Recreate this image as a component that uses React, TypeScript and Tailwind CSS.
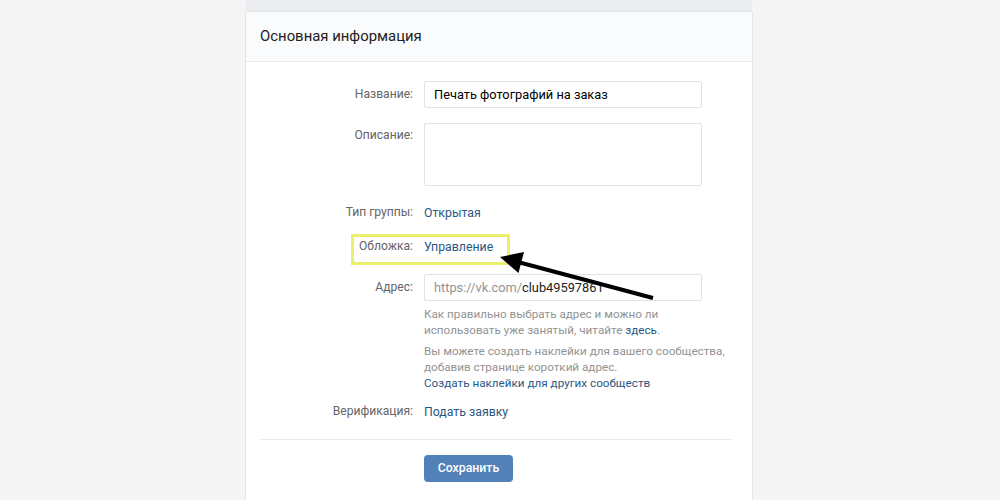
import React from "react";

const font = { fontFamily: "Roboto, 'Open Sans', 'Liberation Sans', sans-serif" };

function Row({ label, children, className = "", labelClass = "" }: { label: string; children: React.ReactNode; className?: string; labelClass?: string }) {
  return (
    <div className={`flex ${className}`}>
      <div className={`w-[153px] shrink-0 text-right text-[12.1px] text-[#656565] ${labelClass}`}>{label}</div>
      <div className="ml-[11px] flex-1">{children}</div>
    </div>
  );
}

export default function App() {
  return (
    <div className="relative h-[500px] w-[1000px] overflow-hidden bg-[#f5f5f5]" style={font}>
      <div className="ml-[246px] h-[500px] w-[506px] bg-[#ebedf0] pt-[12px]">
        <div className="h-[488px] bg-white shadow-[0_0_0_1px_#e4e5e9]">
          <div className="flex h-[50px] items-center border-b border-[#e7e8ec] bg-[#fafbfc] px-[14px] text-[14.9px] text-[#222]">
            Основная информация
          </div>
          <div className="px-[14px]">
            <Row label="Название:" className="mt-[19px] items-center">
              <div className="flex h-[27px] w-[278px] items-center rounded-[2px] border border-[#dfe2e8] px-[9px] text-[12.8px] text-[#000]">
                Печать фотографий на заказ
              </div>
            </Row>
            <Row label="Описание:" className="mt-[15px]" labelClass="pt-[4px] leading-[16px]">
              <div className="h-[63px] w-[278px] rounded-[2px] border border-[#dfe2e8]" />
            </Row>
            <Row label="Тип группы:" className="mt-[18px] leading-[16px]">
              <span className="text-[12.3px] text-[#2a5885]">Открытая</span>
            </Row>
            <Row label="Обложка:" className="mt-[17px] leading-[16px]">
              <span className="text-[12.3px] text-[#2a5885]">Управление</span>
            </Row>
            <Row label="Адрес:" className="mt-[19px] items-center">
              <div className="flex h-[27px] w-[278px] items-center rounded-[2px] border border-[#dfe2e8] px-[9px] text-[12.8px]">
                <span className="text-[#939393]">https://vk.com/</span>
                <span className="text-[#222]">club49597861</span>
              </div>
            </Row>
            <Row label="" className="mt-[5px]">
              <div className="whitespace-nowrap text-[11.7px] leading-[16px] text-[#939393]">
                <div>Как правильно выбрать адрес и можно ли</div>
                <div>использовать уже занятый, читайте <span className="text-[#2a5885]">здесь</span>.</div>
                <div className="mt-[5px]">Вы можете создать наклейки для вашего сообщества,</div>
                <div>добавив странице короткий адрес.</div>
                <div className="text-[#2a5885]">Создать наклейки для других сообществ</div>
              </div>
            </Row>
            <Row label="Верификация:" className="mt-[12px] leading-[16px]">
              <span className="text-[12.3px] text-[#2a5885]">Подать заявку</span>
            </Row>
            <div className="mt-[19px] h-px w-[472px] bg-[#e7e8ec]" />
            <Row label="" className="mt-[15px]">
              <button className="h-[27px] w-[89px] rounded-[4px] bg-[#5181b8] text-[12.3px] font-medium text-white">
                Сохранить
              </button>
            </Row>
          </div>
        </div>
      </div>
      <div className="absolute left-[351px] top-[234px] h-[31px] w-[159px] border-[3px] border-[#eaf06c]" />
      <svg className="pointer-events-none absolute left-0 top-0" width="1000" height="500" viewBox="0 0 1000 500">
        <line x1="653" y1="298" x2="518" y2="262" stroke="#000" strokeWidth="4" />
        <polygon points="500,257 524,252 518.5,273" fill="#000" />
      </svg>
    </div>
  );
}
